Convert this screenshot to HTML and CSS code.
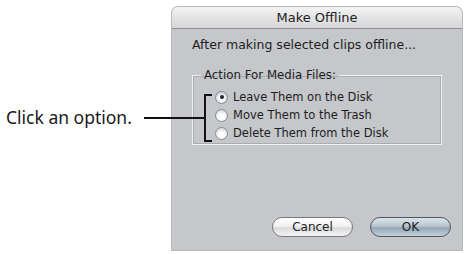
FILE: index.html
```html
<!DOCTYPE html>
<html>
<head>
<meta charset="utf-8">
<link rel="stylesheet" href="styles.css">
</head>
<body>
<div class="stage">
  <div class="callout">
    <span class="callout-text">Click an option.</span>
  </div>
  <div class="dialog">
    <div class="titlebar">Make Offline</div>
    <div class="content">
      <p class="intro">After making selected clips offline...</p>
      <fieldset class="group">
        <legend class="legend">Action For Media Files:</legend>
        <div class="radios">
          <div class="radio-row"><span class="radio checked"></span><span class="radio-label">Leave Them on the Disk</span></div>
          <div class="radio-row"><span class="radio"></span><span class="radio-label">Move Them to the Trash</span></div>
          <div class="radio-row"><span class="radio"></span><span class="radio-label">Delete Them from the Disk</span></div>
        </div>
      </fieldset>
      <div class="buttons">
        <button class="btn">Cancel</button>
        <button class="btn default">OK</button>
      </div>
    </div>
  </div>
  <div class="pointer">
    <span class="pointer-line"></span>
    <span class="bracket"></span>
  </div>
</div>
</body>
</html>
```
FILE: styles.css
```css
html, body {
  margin: 0;
  padding: 0;
  background: #ffffff;
}
body {
  width: 468px;
  height: 254px;
  overflow: hidden;
}
.stage {
  position: relative;
  display: flex;
  padding-top: 7px;
  height: 247px;
}
.callout {
  width: 172px;
  flex: none;
  display: flex;
  align-items: flex-start;
  padding-top: 98px;
  box-sizing: border-box;
}
.callout-text {
  margin-left: 6px;
  font-family: "Noto Sans", sans-serif;
  font-size: 17.5px;
  color: #1a1a1a;
  line-height: 24px;
}
.dialog {
  width: 290px;
  height: 243px;
  flex: none;
  background: #c5c7ca;
  border-radius: 6px 6px 0 0;
  box-shadow: 0 0 0 1px #b7b9bc;
  display: flex;
  flex-direction: column;
  font-family: "DejaVu Sans", sans-serif;
  color: #1e1e1e;
}
.titlebar {
  height: 21px;
  flex: none;
  border-radius: 6px 6px 0 0;
  background: linear-gradient(#f4f4f4, #e4e4e4 50%, #d6d6d6);
  border-bottom: 1px solid #8e8f91;
  text-align: center;
  font-size: 13px;
  line-height: 21px;
  color: #222;
}
.content {
  flex: 1;
  display: flex;
  flex-direction: column;
  padding: 0 20px 0 20px;
}
.intro {
  margin: 7px 0 0 0;
  font-size: 12.5px;
  line-height: 17px;
}
.group {
  margin: 15px 0 0 0;
  padding: 0;
  width: 250px;
  height: 77px;
  box-sizing: border-box;
  border: 1px solid #f0f0f0;
  box-shadow: inset 0 0 0 1px #a9abae;
}
.legend {
  margin-left: 8px;
  padding: 0 3px;
  font-size: 11.8px;
  line-height: 14px;
}
.radios {
  display: flex;
  flex-direction: column;
  gap: 4px;
  margin: 8px 0 0 22px;
}
.radio-row {
  display: flex;
  align-items: center;
  gap: 5px;
  height: 14px;
}
.radio {
  width: 11px;
  height: 11px;
  border-radius: 50%;
  border: 1px solid #8a8c90;
  background: radial-gradient(circle at 50% 65%, #ffffff 30%, #dcdde0 75%, #b9bbbf 100%);
  display: flex;
  align-items: center;
  justify-content: center;
  flex: none;
}
.radio.checked {
  background: radial-gradient(circle at 50% 60%, #f4f6fa 35%, #c3cbd6 80%, #9aa4b0 100%);
}
.radio.checked::after {
  content: "";
  width: 4px;
  height: 4px;
  border-radius: 50%;
  background: #1d2530;
}
.radio-label {
  font-size: 11.5px;
  line-height: 14px;
  white-space: nowrap;
}
.buttons {
  margin-top: auto;
  margin-bottom: 13px;
  display: flex;
  justify-content: flex-end;
  gap: 17px;
  margin-right: -9px;
}
.btn {
  width: 81px;
  height: 20px;
  padding: 0;
  border-radius: 10px;
  border: 1px solid #77797d;
  background: linear-gradient(#ffffff, #f2f2f2 45%, #dadada 55%, #f4f4f4);
  font-family: "DejaVu Sans", sans-serif;
  font-size: 12px;
  color: #222;
  line-height: 18px;
}
.btn.default {
  border-color: #4d5862;
  background: linear-gradient(#dde4ea, #b9c5d0 45%, #95a6b5 55%, #c3d0dc);
}
.pointer {
  position: absolute;
  left: 144px;
  top: 94px;
  width: 68px;
  height: 47px;
}
.pointer-line {
  position: absolute;
  left: 0;
  top: 23px;
  width: 62px;
  height: 2px;
  background: #111;
}
.bracket {
  position: absolute;
  left: 60px;
  top: 0;
  width: 6px;
  height: 44px;
  border: 2px solid #111;
  border-right: none;
}
```
